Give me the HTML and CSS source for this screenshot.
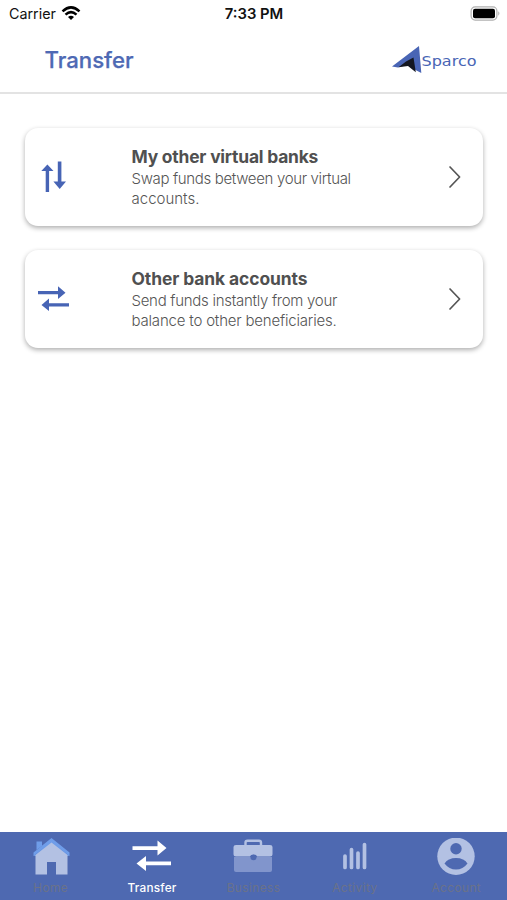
FILE: index.html
```html
<!DOCTYPE html>
<html lang="en">
<head>
<meta charset="utf-8">
<title>Transfer</title>
<link rel="stylesheet" href="styles.css">
</head>
<body>
<div class="app">
  <div class="status">
    <div class="carrier"><span>Carrier</span>
      <svg width="20" height="15" viewBox="0 0 20 15"><g fill="none" stroke="#000" stroke-width="2.5"><path d="M1.5 5.3Q10-2.5 18.5 5.3"/><path d="M4.5 8.6Q10 3.6 15.5 8.6"/></g><path d="M7 11Q10 8.6 13 11L10 14Z"/></svg>
    </div>
    <span class="clock">7:33 PM</span>
    <svg class="battery" width="31" height="16" viewBox="0 0 31 16"><rect x="1.1" y=".9" width="25.8" height="13.2" rx="4" fill="#fff" stroke="#b0b0b0" stroke-width="1.2"/><rect x="3" y="2.8" width="22" height="9.4" rx="2"/><path d="M28.3 5.3Q30.5 7.5 28.3 9.7Z" fill="#aaa"/></svg>
  </div>
  <header class="header">
    <h1>Transfer</h1>
    <svg class="logo" width="86" height="30" viewBox="0 0 86 30"><path d="M1 21.500L28 1L30.300 28L25.500 25.500L16 20L7 22.500Z" fill="#4965b5"/><path d="M7.500 22.300L15 16.500L22.500 12.500L24.800 27.300L17 21Z" fill="#141720"/><text class="logo-text" x="30.500" y="20.800" textLength="55" lengthAdjust="spacingAndGlyphs">Sparco</text></svg>
  </header>
  <main class="list">
    <a class="card">
      <svg class="card-icon" width="32" height="32" viewBox="0 0 32 32" fill="#4764b5"><path d="M7.700 31V10H3.300L9.400 3.500L15.500 10H11.100V31ZM19.800 .5H23.400V20.500H28L21.700 28L15.400 20.500H19.800Z"/></svg>
      <div class="card-text"><h2 class="title-a">My other virtual banks</h2><p><span class="a1">Swap funds between your virtual</span><br><span class="a2">accounts.</span></p></div>
      <svg class="chevron" width="14" height="24" viewBox="0 0 14 24"><path d="M2 2L11.600 12L2 22"/></svg>
    </a>
    <a class="card">
      <svg class="card-icon" width="32" height="32" viewBox="0 0 32 32" fill="#4764b5"><path d="M0 8H20V3.200L27.500 9.700L20 16V11.300H0ZM31 20.200H11V15.500L3.500 22L11 28V23.600H31Z"/></svg>
      <div class="card-text"><h2 class="title-b">Other bank accounts</h2><p><span class="b1">Send funds instantly from your</span><br><span class="b2">balance to other beneficiaries.</span></p></div>
      <svg class="chevron" width="14" height="24" viewBox="0 0 14 24"><path d="M2 2L11.600 12L2 22"/></svg>
    </a>
  </main>
  <nav class="tabs">
    <a class="tab"><svg width="40" height="40" viewBox="0 0 40 40"><path d="M5.500 12V3.500H11V8M2.500 18L20.500 3L38.500 18" fill="#6f9de9"/><path d="M2.500 18V14.500L20.500 0L38.500 14.500V18L20.500 4Z" fill="#6f9de9"/><path d="M4.500 17L20.500 4.500L36.500 17V36.500H25V24H16V36.500H4.500Z" fill="#b3c1e3"/></svg><span>Home</span></a>
    <a class="tab active"><svg width="40" height="40" viewBox="0 0 40 40" fill="#fff"><path d="M.5 8.200H25.500V2.500L34.500 10L25.500 17.500V12H.5ZM39 23.500H14V18L4.500 25.500L14 33V27.300H39Z"/></svg><span>Transfer</span></a>
    <a class="tab"><svg width="40" height="40" viewBox="0 0 40 40"><path d="M1 19H39V32Q39 34 37 34H3Q1 34 1 32Z" fill="#8195cc"/><path d="M12.500 8V4.500Q12.500 2.800 14.500 2.800H26Q28 2.800 28 4.500V8" fill="none" stroke="#b3c1e3" stroke-width="2.400"/><path d="M3 7H37Q39.500 7 39.500 9V16Q39.500 18.500 37 18.500H24Q23.500 16.500 20.500 16.500Q17.500 16.500 17 18.500H3Q.5 18.500.5 16V9Q.5 7 3 7Z" fill="#b3c1e3"/><ellipse cx="20.500" cy="19.500" rx="3" ry="2.700" fill="#4e69b1"/></svg><span>Business</span></a>
    <a class="tab"><svg width="40" height="40" viewBox="0 0 40 40"><path d="M10 18V29.500M16.500 11.500V29.500M23 15V29.500M29.500 6.500V29.500" stroke="#b3c1e3" stroke-width="3.700" stroke-linecap="round"/></svg><span>Activity</span></a>
    <a class="tab"><svg width="40" height="40" viewBox="0 0 40 40"><circle cx="20" cy="18.300" r="18.700" fill="#b3c1e3"/><circle cx="20" cy="10.700" r="5.700" fill="#4e69b1"/><path d="M8.500 25.500Q12 20 20 20Q28 20 31.500 25.500Q27 31.500 20 31.500Q13 31.500 8.500 25.500Z" fill="#4e69b1"/></svg><span>Account</span></a>
  </nav>
</div>
</body>
</html>
```
FILE: styles.css
```css
* { box-sizing: border-box; }
body { margin: 0; background: #fff; font-family: Inter, "Liberation Sans", sans-serif; }
.app { width: 507px; height: 900px; display: flex; flex-direction: column; overflow: hidden; }
.status { height: 27px; display: grid; grid-template-columns: 1fr auto 1fr; align-items: center; padding: 0 6px 0 7px; color: #111; }
.carrier { display: flex; align-items: center; gap: 5px; padding-left: 2px; font-size: 14.3px; }
.clock { font-size: 14.8px; font-weight: 600; }
.battery { justify-self: end; }
.header { height: 67px; border-bottom: 2px solid #e3e3e3; display: flex; justify-content: space-between; align-items: center; padding: 0 30px 0 44.500px; }
h1 { margin: 0; font-size: 22.2px; font-weight: 500; line-height: 28px; color: #4e69b4; -webkit-text-stroke: .25px #4e69b4; }
.logo-text { font: 13.500px "DejaVu Sans", sans-serif; fill: #4965b5; }
.list { flex: 1; padding: 34px 24px 0 25px; display: flex; flex-direction: column; gap: 24px; }
.card { height: 98px; border-radius: 13px; background: #fff; box-shadow: 0 2px 5px rgba(0,0,0,.32); display: flex; align-items: flex-start; padding: 18px 21px 0 13px; }
.card-icon { margin-top: 15px; }
.card-text { flex: 1; margin-left: 61.500px; white-space: nowrap; }
h2 { margin: 0; font-size: 17.400px; font-weight: 650; line-height: 22px; color: #505050; }
p { margin: 1px 0 0; font-size: 15px; font-weight: 300; line-height: 20px; color: #555; }
.title-a { letter-spacing: -.2px; }
.title-b { letter-spacing: -.08px; }
.a1 { letter-spacing: -.34px; }
.b1 { letter-spacing: -.28px; }
.b2 { letter-spacing: -.19px; }
.chevron { margin-top: 19px; fill: none; stroke: #555; stroke-width: 1.700; stroke-linecap: round; stroke-linejoin: round; }
.tabs { height: 68px; background: #4e69b1; display: grid; grid-template-columns: repeat(5, 1fr); }
.tab { display: flex; flex-direction: column; align-items: center; padding-top: 6px; font-size: 11.800px; line-height: 16px; color: #6b7289; letter-spacing: .45px; }
.tab span { margin-top: 2px; }
.active { color: #fff; font-weight: 500; letter-spacing: .2px; }
```
